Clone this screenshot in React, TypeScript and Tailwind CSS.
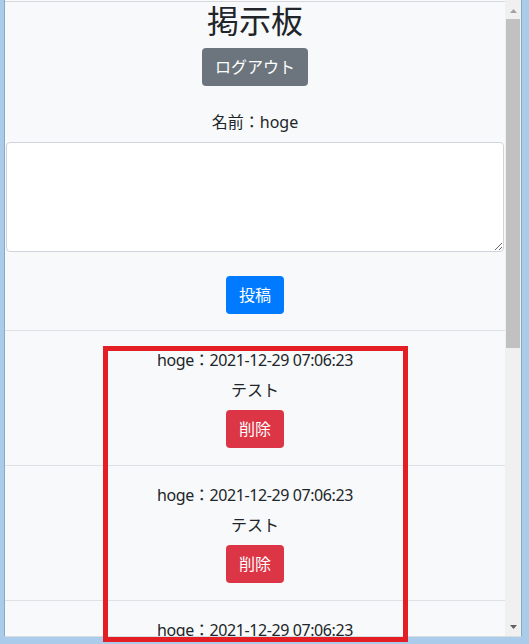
import React from 'react'

type Post = { id: number; name: string; createdAt: string; body: string }

const posts: Post[] = [
  { id: 1, name: 'hoge', createdAt: '2021-12-29 07:06:23', body: 'テスト' },
  { id: 2, name: 'hoge', createdAt: '2021-12-29 07:06:23', body: 'テスト' },
  { id: 3, name: 'hoge', createdAt: '2021-12-29 07:06:23', body: 'テスト' },
]

const font = { fontFamily: '"Noto Sans", "Noto Sans CJK JP", sans-serif' }

function PostItem({ post }: { post: Post }) {
  return (
    <div className="border-t border-[#dee2e6] pt-[17px] pb-[17px] flex flex-col items-center shrink-0">
      <p className="leading-6 tracking-[-0.4px]">
        {post.name}：{post.createdAt}
      </p>
      <p className="mt-[6px] leading-6">{post.body}</p>
      <button className="mt-2 h-[38px] px-[13px] rounded-[4px] bg-[#dc3545] text-white leading-6">
        削除
      </button>
    </div>
  )
}

function Scrollbar() {
  return (
    <div className="w-[16px] bg-[#f0f0f0] flex flex-col items-center shrink-0">
      {/* up arrow (disabled, at top) */}
      <div className="h-[19px] pt-[9px] flex justify-center">
        <svg width="7" height="4" viewBox="0 0 7 4">
          <path d="M3.5 0 L7 4 L0 4 Z" fill="#a3a3a3" />
        </svg>
      </div>
      <div className="w-[14px] h-[329px] bg-[#c1c1c1]" />
      <div className="flex-1" />
      <div className="h-[17px] pt-[6px] flex justify-center">
        <svg width="7" height="4" viewBox="0 0 7 4">
          <path d="M0 0 L7 0 L3.5 4 Z" fill="#606060" />
        </svg>
      </div>
    </div>
  )
}

export default function App() {
  return (
    <div
      className="relative w-[529px] h-[644px] bg-[#abcbea] pl-[4px] pr-[7px] pb-[7px] flex text-[16px] text-[#212529]"
      style={font}
    >
      <div className="flex-1 flex border-l border-r border-l-[#89a9c8] border-r-[#89a9c8] border-b border-b-[#d9dde1] overflow-hidden">
        {/* page */}
        <div className="w-[500px] flex flex-col overflow-hidden bg-[#f8f9fa]">
          <div className="h-px bg-[#fbfbfc] shrink-0" />
          <div className="h-px bg-[#d3d8dd] shrink-0" />

          <div className="flex flex-col items-center shrink-0">
            <h1 className="text-[32px] leading-[38px] font-normal mb-2">掲示板</h1>
            <button className="h-[38px] px-[13px] rounded-[4px] bg-[#6c757d] text-white leading-6">
              ログアウト
            </button>
            <p className="mt-6 leading-6">名前：hoge</p>
          </div>

          <div className="mt-2 px-px shrink-0">
            <textarea className="block w-full h-[110px] bg-white border border-[#ced4da] rounded-[4px] outline-none" />
          </div>

          <div className="mt-6 mb-4 flex justify-center shrink-0">
            <button className="h-[38px] px-[13px] rounded-[4px] bg-[#007bff] text-white leading-6">
              投稿
            </button>
          </div>

          {posts.map((p) => (
            <PostItem key={p.id} post={p} />
          ))}
        </div>

        <Scrollbar />
      </div>

      {/* red highlight box */}
      <div className="absolute left-[103px] top-[346px] w-[305px] h-[296px] border-[5px] border-[#e31e25] pointer-events-none" />
    </div>
  )
}
